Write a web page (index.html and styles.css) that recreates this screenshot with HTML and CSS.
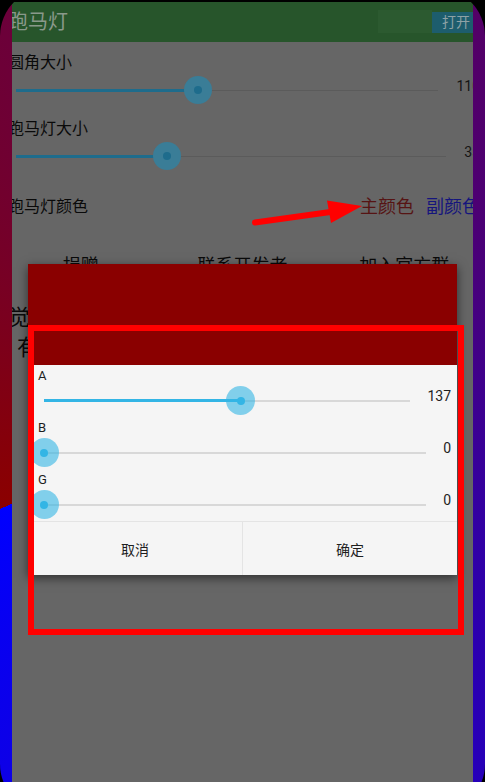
FILE: index.html
```html
<!DOCTYPE html>
<html lang="zh-CN">
<head>
<meta charset="utf-8">
<title>跑马灯</title>
<link rel="stylesheet" href="styles.css">
</head>
<body>
<div class="screen">
  <div class="app">
    <header class="appbar">
      <span class="app-title">跑马灯</span>
      <div class="appbar-actions">
        <span class="field"></span>
        <button class="open-btn">打开</button>
      </div>
    </header>
    <main class="settings">
      <div class="label first">圆角大小</div>
      <div class="seek-row">
        <div class="seek"><div class="track"><div class="fill" style="width:43.1%"></div><span class="thumb" style="left:43.1%"></span></div></div>
        <span class="value">110</span>
      </div>
      <div class="label second">跑马灯大小</div>
      <div class="seek-row">
        <div class="seek"><div class="track"><div class="fill" style="width:35%"></div><span class="thumb" style="left:35%"></span></div></div>
        <span class="value">35</span>
      </div>
      <div class="color-row">
        <span class="label">跑马灯颜色</span>
        <span class="color-btn primary">主颜色</span>
        <span class="color-btn secondary">副颜色</span>
      </div>
      <nav class="links">
        <span class="link">捐赠</span>
        <span class="link">联系开发者</span>
        <span class="link">加入官方群</span>
      </nav>
      <p class="note"><span class="note-line">觉得好用就给个好评吧</span><span class="note-line indent">有问题请联系开发者</span></p>
    </main>
  </div>

  <div class="dialog">
    <div class="dialog-preview"></div>
    <div class="dialog-body">
      <div class="channel">
        <div class="ch-label">A</div>
        <div class="ch-row">
          <div class="ch-seek"><div class="ch-track"><div class="ch-fill" style="width:53.7%"></div><span class="ch-thumb" style="left:53.7%"></span></div></div>
          <span class="ch-value">137</span>
        </div>
      </div>
      <div class="channel">
        <div class="ch-label">B</div>
        <div class="ch-row">
          <div class="ch-seek"><div class="ch-track"><div class="ch-fill" style="width:0%"></div><span class="ch-thumb" style="left:0%"></span></div></div>
          <span class="ch-value">0</span>
        </div>
      </div>
      <div class="channel">
        <div class="ch-label">G</div>
        <div class="ch-row">
          <div class="ch-seek"><div class="ch-track"><div class="ch-fill" style="width:0%"></div><span class="ch-thumb" style="left:0%"></span></div></div>
          <span class="ch-value">0</span>
        </div>
      </div>
    </div>
    <div class="dialog-actions">
      <button class="dlg-btn">取消</button>
      <button class="dlg-btn">确定</button>
    </div>
  </div>

  <svg class="annot" width="485" height="782" viewBox="0 0 485 782">
    <line x1="255" y1="222.5" x2="334" y2="211.5" stroke="#ff0000" stroke-width="6" stroke-linecap="round"/>
    <polygon points="362,206 327,200.5 331,223" fill="#ff0000"/>
    <rect x="31" y="328" width="430" height="304" fill="none" stroke="#ff0000" stroke-width="6"/>
  </svg>

  <div class="bezel-side left"></div>
  <div class="bezel-side right"></div>
  <div class="bezel-corners"></div>
</div>
</body>
</html>
```

FILE: styles.css
```css
* { box-sizing: border-box; }

body {
  margin: 0;
  background: #000;
  font-family: Roboto, "Noto Sans CJK SC", sans-serif;
}

.screen {
  position: relative;
  width: 485px;
  height: 782px;
  overflow: hidden;
  background: #000;
}

.app {
  margin-top: 2px;
  height: 780px;
  background: #666666;
}

/* ---------- app bar ---------- */
.appbar {
  height: 40px;
  background: #27552b;
  display: flex;
  align-items: center;
  padding: 0 5px 0 8px;
}

.app-title {
  flex: 1;
  font-size: 20px;
  line-height: 1;
  color: #8a998b;
}

.appbar-actions {
  align-self: flex-end;
  margin-bottom: 9px;
  display: flex;
  align-items: flex-end;
}

.field {
  width: 54px;
  height: 23px;
  background: #2c5a30;
}

.open-btn {
  width: 48px;
  height: 21px;
  padding: 0;
  border: 0;
  background: #1d5d6d;
  color: #8ea2a6;
  font-family: inherit;
  font-size: 14px;
  line-height: 21px;
  text-align: center;
}

/* ---------- settings ---------- */
.settings {
  padding: 0 5px 0 8px;
}

.label {
  font-size: 16px;
  line-height: 22px;
  color: #0a0a0a;
}

.label.first { margin-top: 10px; }
.label.second { margin-top: 12px; }

.seek-row {
  display: flex;
  align-items: center;
  height: 32px;
}

.seek {
  flex: 1;
  padding: 0 8px;
  display: flex;
  align-items: center;
}

.track {
  position: relative;
  flex: 1;
  height: 1px;
  background: #5b5b5b;
}

.fill {
  height: 3px;
  margin-top: -1px;
  background: #1e6c8c;
}

.thumb {
  position: absolute;
  top: 0;
  width: 28px;
  height: 28px;
  margin: -13.5px 0 0 -14px;
  border-radius: 50%;
  background: #3a7d97;
  display: flex;
  align-items: center;
  justify-content: center;
}

.thumb::after {
  content: "";
  width: 8px;
  height: 8px;
  border-radius: 50%;
  background: #1e6c8c;
}

.value {
  margin-left: 10px;
  font-size: 14px;
  line-height: 16px;
  margin-bottom: 8px;
  color: #151515;
}

.color-row {
  margin-top: 15px;
  height: 40px;
  display: flex;
  align-items: center;
}

.color-row .label { flex: 1; }

.color-btn {
  font-size: 18px;
  line-height: 24px;
}

.color-btn.primary { color: #561414; }
.color-btn.secondary { color: #15157d; margin-left: 12px; }

.links {
  margin: 15px -5px 0 -8px;
  height: 44px;
  display: flex;
  align-items: center;
}

.link {
  flex: 1;
  text-align: center;
  font-size: 18px;
  color: #0a0a0a;
}

.note {
  margin: 17px 0 0;
  font-size: 22px;
  line-height: 30px;
  color: #0a0a0a;
}

.note-line { display: block; }
.note-line.indent { padding-left: 9px; }

/* ---------- dialog ---------- */
.dialog {
  position: absolute;
  left: 28px;
  top: 264px;
  width: 429px;
  background: #f5f5f5;
  box-shadow: 0 3px 10px rgba(0, 0, 0, 0.55);
}

.dialog-preview {
  height: 101px;
  background: #8a0000;
}

.dialog-body {
  padding: 0 6px 0 10px;
}

.channel {
  height: 52px;
  padding-top: 3px;
}

.ch-label {
  font-size: 13px;
  line-height: 16px;
  color: #1e1e1e;
}

.ch-row {
  height: 33px;
  display: flex;
  align-items: center;
}

.ch-seek {
  flex: 1;
  padding: 0 8px 0 6px;
  display: flex;
  align-items: center;
}

.ch-track {
  position: relative;
  flex: 1;
  height: 2px;
  background: #d8d8d8;
}

.ch-fill {
  height: 3px;
  margin-top: -0.5px;
  background: #33b5e5;
}

.ch-thumb {
  position: absolute;
  top: 1px;
  width: 29px;
  height: 29px;
  margin: -14.5px 0 0 -14.5px;
  border-radius: 50%;
  background: rgba(51, 181, 229, 0.6);
  display: flex;
  align-items: center;
  justify-content: center;
}

.ch-thumb::after {
  content: "";
  width: 8px;
  height: 8px;
  border-radius: 50%;
  background: #33b5e5;
}

.ch-value {
  margin-left: 9px;
  margin-bottom: 10px;
  font-size: 14px;
  line-height: 16px;
  color: #1e1e1e;
}

.dialog-actions {
  display: flex;
  height: 54px;
  border-top: 1px solid #e4e4e4;
}

.dlg-btn {
  flex: 1;
  border: 0;
  background: transparent;
  font-family: inherit;
  font-size: 14px;
  color: #1e1e1e;
  padding: 0;
}

.dlg-btn + .dlg-btn {
  border-left: 1px solid #e4e4e4;
}

/* ---------- annotations ---------- */
.annot {
  position: absolute;
  left: 0;
  top: 0;
  pointer-events: none;
}

/* ---------- marquee bezel ---------- */
.bezel-side {
  position: absolute;
  top: 0;
  bottom: 0;
  width: 12px;
  background-image: conic-gradient(from 247deg at 242.5px 406px, #8b0000, #0000ff);
  background-size: 485px 782px;
  background-repeat: no-repeat;
}

.bezel-side.left { left: 0; background-position: 0 0; }
.bezel-side.right { right: 0; background-position: -473px 0; }

.bezel-corners {
  position: absolute;
  top: -12px;
  left: 0;
  right: 0;
  bottom: -30px;
  border-radius: 48px;
  box-shadow: 0 0 0 60px #000;
  pointer-events: none;
}
```
